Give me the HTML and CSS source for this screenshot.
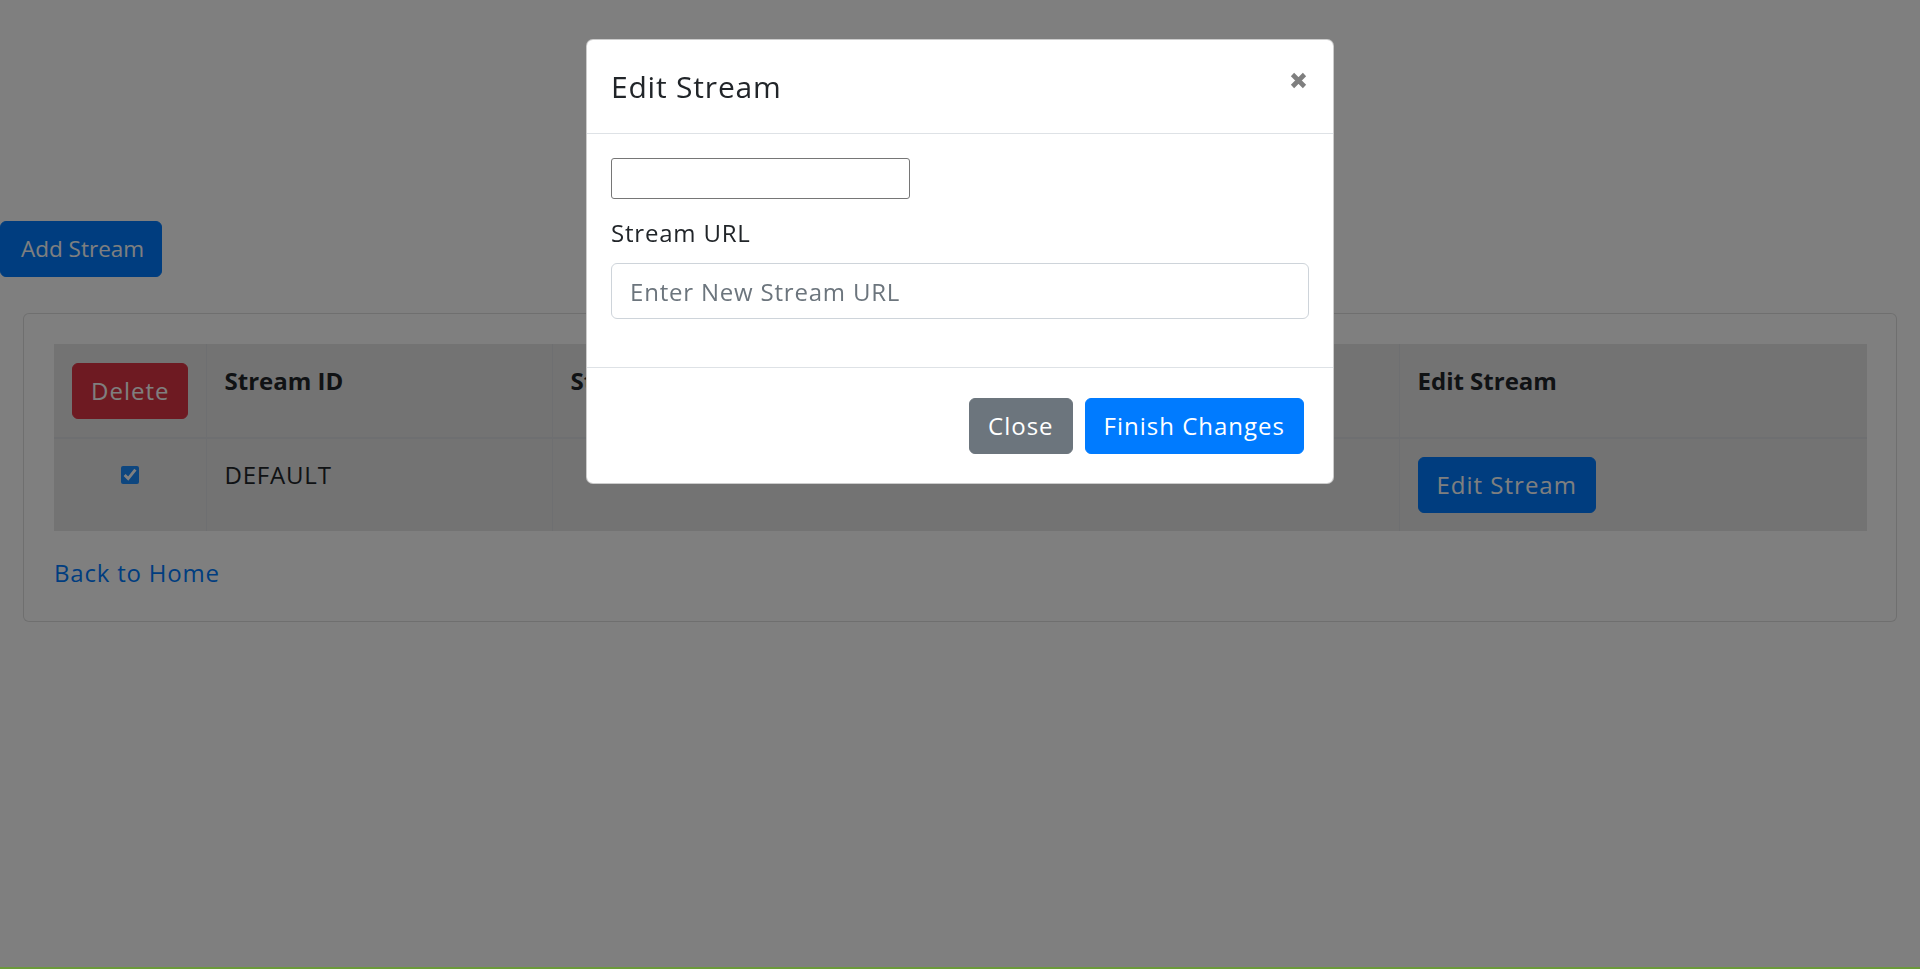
FILE: index.html
```html
<!DOCTYPE html>
<html lang="en">
<head>
<meta charset="utf-8">
<title>Streams</title>
<link rel="stylesheet" href="styles.css">
</head>
<body>
<div class="page">
  <div class="toolbar">
    <button class="btn btn-primary btn-add" type="button">Add Stream</button>
  </div>
  <div class="container">
    <div class="card">
      <div class="card-body">
        <table class="streams">
          <colgroup>
            <col class="col-select">
            <col class="col-id">
            <col class="col-url">
            <col class="col-edit">
          </colgroup>
          <thead>
            <tr>
              <th class="cell-center"><button class="btn btn-danger" type="button">Delete</button></th>
              <th>Stream ID</th>
              <th>Stream URL</th>
              <th>Edit Stream</th>
            </tr>
          </thead>
          <tbody>
            <tr>
              <td class="cell-center"><input class="row-check" type="checkbox" checked></td>
              <td>DEFAULT</td>
              <td></td>
              <td><button class="btn btn-primary" type="button">Edit Stream</button></td>
            </tr>
          </tbody>
        </table>
        <a class="back-link" href="#">Back to Home</a>
      </div>
    </div>
  </div>
</div>

<div class="backdrop"></div>

<div class="modal">
  <div class="modal-dialog">
    <div class="modal-content">
      <div class="modal-header">
        <h5 class="modal-title">Edit Stream</h5>
        <button class="close" type="button" aria-label="Close">
          <svg width="17" height="17" viewBox="0 0 17 17"><path d="M2.5 2.5 L14.5 14.5 M14.5 2.5 L2.5 14.5" stroke="#7f7f7f" stroke-width="4.6" stroke-linecap="butt"/></svg>
        </button>
      </div>
      <div class="modal-body">
        <input class="plain-input" type="text">
        <div class="form-group">
          <label class="field-label" for="url">Stream URL</label>
          <input class="form-control" id="url" type="text" placeholder="Enter New Stream URL">
        </div>
      </div>
      <div class="modal-footer">
        <button class="btn btn-secondary" type="button">Close</button>
        <button class="btn btn-primary" type="button">Finish Changes</button>
      </div>
    </div>
  </div>
</div>

<div class="status-bar"></div>
</body>
</html>
```

FILE: styles.css
```css
* { box-sizing: border-box; }

html, body {
  margin: 0;
  height: 100%;
}

body {
  font-family: "Open Sans", "DejaVu Sans", sans-serif;
  font-size: 24px;
  line-height: 36px;
  letter-spacing: 0.8px;
  color: #212529;
  background: #ffffff;
  overflow: hidden;
}

.page {
  padding-top: 221px;
}

.btn {
  display: inline-block;
  font-family: inherit;
  font-size: 24px;
  line-height: 36px;
  letter-spacing: 1px;
  padding: 9px 18px;
  border: 1px solid transparent;
  border-radius: 6px;
  color: #ffffff;
  cursor: pointer;
  vertical-align: middle;
}

.btn-primary { background: #007bff; border-color: #007bff; }
.btn-danger { background: #dc3545; border-color: #dc3545; }
.btn-secondary { background: #6c757d; border-color: #6c757d; }

.btn-add {
  font-size: 22.5px;
  letter-spacing: 0;
  padding: 9px 17px 9px 20px;
  margin: 0;
}

.container {
  padding: 0 23px;
  margin-top: 36px;
}

.card {
  border: 1px solid rgba(0, 0, 0, 0.125);
  border-radius: 6px;
  background: #ffffff;
}

.card-body {
  padding: 30px;
}

.streams {
  width: 100%;
  table-layout: fixed;
  border-collapse: collapse;
  background: #e6e6e6;
  margin-bottom: 24px;
}

.col-select { width: 152px; }
.col-id { width: 346px; }
.col-url { width: 847px; }
.col-edit { width: 468px; }

.streams th,
.streams td {
  padding: 18px;
  text-align: left;
  vertical-align: top;
  border: 1px solid #dcdfe2;
  white-space: nowrap;
  overflow: hidden;
}

.streams th {
  font-weight: 700;
  letter-spacing: 0;
  border-bottom-width: 2px;
}

.streams tr > :first-child { border-left: 0; }
.streams tr > :last-child { border-right: 0; }
.streams thead th { border-top: 1px solid #e6e6e6; }
.streams tbody td { border-bottom: 0; }

.streams .cell-center { text-align: center; }

.row-check {
  width: 18px;
  height: 18px;
  margin: 0;
  margin-top: 9px;
  vertical-align: top;
  accent-color: #1a8cff;
}

.back-link {
  color: #007bff;
  text-decoration: none;
}

.backdrop {
  position: fixed;
  inset: 0;
  background: rgba(0, 0, 0, 0.5);
  z-index: 1040;
}

.modal {
  position: fixed;
  inset: 0;
  z-index: 1050;
}

.modal-dialog {
  width: 748px;
  margin: 39px auto 0;
}

.modal-content {
  background: #ffffff;
  border: 1px solid rgba(0, 0, 0, 0.2);
  border-radius: 7px;
}

.modal-header {
  display: flex;
  align-items: flex-start;
  padding: 24px;
  border-bottom: 1px solid #dee2e6;
}

.modal-title {
  margin: 0;
  font-size: 30px;
  line-height: 45px;
  font-weight: 500;
  letter-spacing: 0.8px;
  color: #212529;
}

.close {
  margin: 8px 2px 0 auto;
  padding: 0;
  border: 0;
  background: transparent;
  display: flex;
  cursor: pointer;
}

.modal-body {
  padding: 24px;
}

.plain-input {
  display: block;
  width: 299px;
  height: 41px;
  border: 1px solid #767676;
  border-radius: 3px;
  padding: 1px 3px;
  font-size: 20px;
  margin: 0 0 16px;
}

.form-group {
  margin-bottom: 24px;
}

.field-label {
  display: inline-block;
  margin-bottom: 12px;
}

.form-control {
  display: block;
  width: 100%;
  height: 56px;
  padding: 9px 18px;
  font-family: inherit;
  font-size: 24px;
  line-height: 36px;
  letter-spacing: 0.8px;
  color: #495057;
  border: 1px solid #ced4da;
  border-radius: 6px;
  background: #ffffff;
}

.form-control::placeholder {
  color: #6c757d;
}

.modal-footer {
  display: flex;
  justify-content: flex-end;
  align-items: center;
  padding: 30px 29px 29px;
  border-top: 1px solid #dee2e6;
}

.modal-footer .btn {
  margin: 0 0 0 12px;
}

.status-bar {
  position: fixed;
  left: 0;
  right: 0;
  bottom: 0;
  height: 2px;
  background: #6b9a3a;
  z-index: 2000;
}
```
